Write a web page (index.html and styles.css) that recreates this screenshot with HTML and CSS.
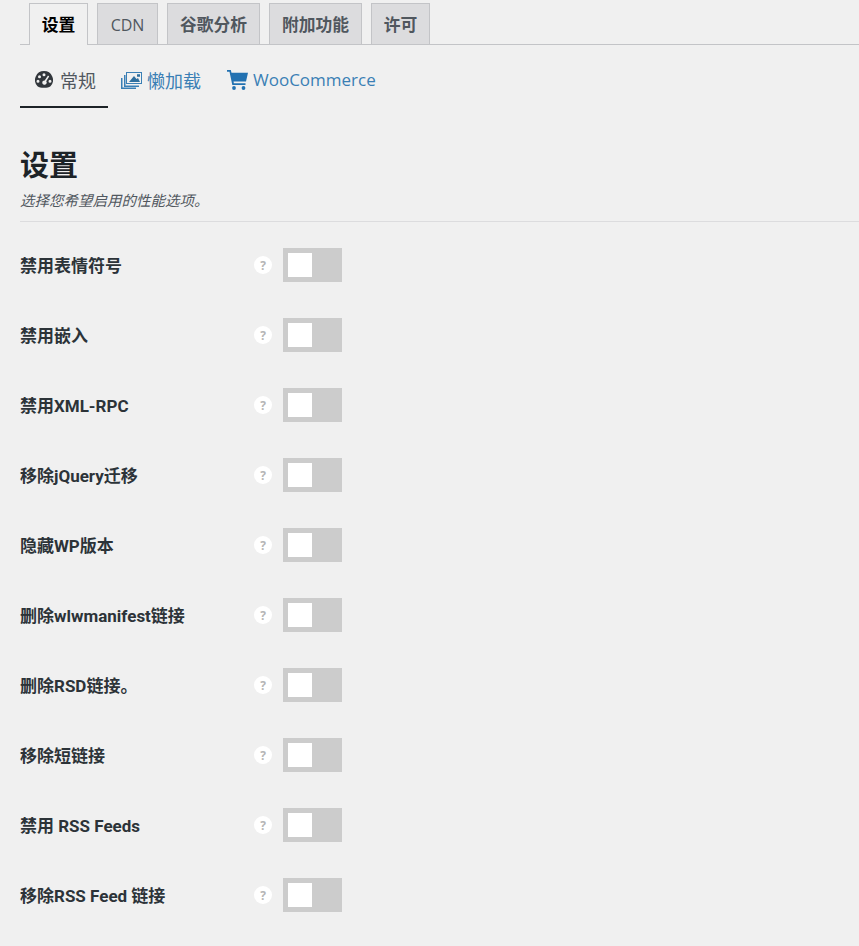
FILE: index.html
```html
<!DOCTYPE html>
<html lang="zh-CN">
<head>
    <meta charset="utf-8">
    <title>设置</title>
    <link rel="stylesheet" href="styles.css">
</head>
<body>
<div class="tabs">
    <a class="tab tab_active">设置</a>
    <a class="tab tab_cdn">CDN</a>
    <a class="tab">谷歌分析</a>
    <a class="tab">附加功能</a>
    <a class="tab">许可</a>
</div>

<div class="subnav">
    <a class="subnav_item subnav_active">
        <svg class="icon" width="18" height="17" viewBox="0 0 18 17"><path fill="#32373c" fill-rule="evenodd" d="M9 0a9 9 0 0 1 6.500 15.200C14 16.400 12 16.800 9 16.800s-5-.4-6.500-1.600A9 9 0 0 1 9 0zM9 2.200a1.500 1.500 0 1 0 0 3 1.500 1.500 0 0 0 0-3zM4.500 4.200a1.500 1.500 0 1 0 0 3 1.500 1.500 0 0 0 0-3zM3 8.800a1.500 1.500 0 1 0 0 3 1.500 1.500 0 0 0 0-3zM15 8.800a1.500 1.500 0 1 0 0 3 1.500 1.500 0 0 0 0-3zM13 4.600 9.700 9.400a2.200 2.200 0 1 0 1.500.8l3-4.800z"/></svg>
        常规
    </a>
    <a class="subnav_item">
        <svg class="icon" width="21" height="18" viewBox="0 0 21 18"><path fill="#3a7fb5" d="M5 1h16v12H5z"/><path fill="#f1f1f1" d="M6 2h14v10H6z"/><path fill="#2f6f9f" d="M8 11l5-6 2.500 3 1.500-1 2 4H8zM16 3.200h3v2.500h-3z"/><path fill="#3a7fb5" d="M3 4h1.500v10.500H18V16H3zM0 7h1.500v9.500H15V18H0z"/></svg>
        懒加载
    </a>
    <a class="subnav_item subnav_latin">
        <svg class="icon" width="21" height="20" viewBox="0 0 21 20"><path fill="#2271b1" d="M0 0h3.800l.7 2.800H21l-2 8.700H6.500l.4 1.700H18.500V15H5.300L2.500 1.800H0z"/><circle fill="#2271b1" cx="7" cy="18" r="1.900"/><circle fill="#2271b1" cx="16.500" cy="18" r="1.900"/></svg>
        WooCommerce
    </a>
</div>

<h2 class="section_title">设置</h2>
<p class="section_desc">选择您希望启用的性能选项。</p>

<div class="rows">
    <div class="row"><span class="row_label">禁用表情符号</span><span class="help">?</span><span class="toggle"><span class="knob"></span></span></div>
    <div class="row"><span class="row_label">禁用嵌入</span><span class="help">?</span><span class="toggle"><span class="knob"></span></span></div>
    <div class="row"><span class="row_label">禁用XML-RPC</span><span class="help">?</span><span class="toggle"><span class="knob"></span></span></div>
    <div class="row"><span class="row_label">移除jQuery迁移</span><span class="help">?</span><span class="toggle"><span class="knob"></span></span></div>
    <div class="row"><span class="row_label">隐藏WP版本</span><span class="help">?</span><span class="toggle"><span class="knob"></span></span></div>
    <div class="row"><span class="row_label">删除wlwmanifest链接</span><span class="help">?</span><span class="toggle"><span class="knob"></span></span></div>
    <div class="row"><span class="row_label">删除RSD链接。</span><span class="help">?</span><span class="toggle"><span class="knob"></span></span></div>
    <div class="row"><span class="row_label">移除短链接</span><span class="help">?</span><span class="toggle"><span class="knob"></span></span></div>
    <div class="row"><span class="row_label">禁用 RSS Feeds</span><span class="help">?</span><span class="toggle"><span class="knob"></span></span></div>
    <div class="row"><span class="row_label">移除RSS Feed 链接</span><span class="help">?</span><span class="toggle"><span class="knob"></span></span></div>
</div>
</body>
</html>
```

FILE: styles.css
```css
html, body {
    height: 946px;
    overflow: hidden;
}

body {
    margin: 0;
    padding: 3px 0 0 20px;
    box-sizing: border-box;
    background-color: #f0f0f0;
    color: #1d2327;
    font-family: "Open Sans", "Noto Sans CJK SC", sans-serif;
}

.tabs {
    display: grid;
    grid-template-columns: 59px 61px 93px 93px 59px;
    gap: 9px;
    height: 42px;
    box-sizing: border-box;
    padding-left: 9px;
    border-bottom: 1px solid #c3c4c7;
}

.tab {
    height: 41px;
    box-sizing: border-box;
    border: 1px solid #c3c4c7;
    border-bottom: 0;
    background-color: #dcdcde;
    color: #50575e;
    font-size: 16.8px;
    font-weight: 600;
    line-height: 42px;
    text-align: center;
}

.tab_active {
    height: 42px;
    background-color: #f0f0f0;
    color: #000;
}

.tab_cdn {
    font-weight: 500;
    font-size: 16px;
}

.subnav {
    display: flex;
    gap: 26px;
    height: 63px;
}

.subnav_item {
    display: flex;
    align-items: center;
    gap: 5px;
    height: 63px;
    padding-top: 6px;
    box-sizing: border-box;
    color: #3a7fb5;
    font-size: 18px;
    white-space: nowrap;
}

.subnav_latin {
    font-size: 17px;
}

.subnav_active {
    gap: 7px;
    width: 88px;
    padding-top: 8px;
    padding-left: 15px;
    margin-right: -13px;
    border-bottom: 2px solid #1d2327;
    color: #50575e;
}

.icon {
    flex: none;
}

.section_title {
    margin: 35px 0 0;
    font-size: 29px;
    font-weight: 700;
    line-height: 44px;
}

.section_desc {
    margin: 5px 0 0;
    padding-bottom: 11px;
    border-bottom: 1px solid #dcdcde;
    color: #50575e;
    font-size: 14.5px;
    font-style: italic;
    line-height: 18px;
}

.rows {
    padding-top: 8px;
}

.row {
    display: flex;
    align-items: center;
    height: 70px;
}

.row_label {
    width: 234px;
    padding-bottom: 1px;
    font-family: Roboto, "Noto Sans CJK SC", sans-serif;
    font-size: 17px;
    font-weight: 700;
    color: #2c3338;
    white-space: nowrap;
}

.help {
    width: 18px;
    height: 18px;
    border-radius: 50%;
    background-color: #fff;
    color: #b5b5b5;
    font-size: 12px;
    font-weight: 700;
    line-height: 19px;
    text-align: center;
}

.toggle {
    display: flex;
    align-items: center;
    width: 59px;
    height: 34px;
    margin-left: 11px;
    padding-left: 5px;
    box-sizing: border-box;
    background-color: #ccc;
}

.knob {
    width: 24px;
    height: 24px;
    background-color: #fff;
}
```
